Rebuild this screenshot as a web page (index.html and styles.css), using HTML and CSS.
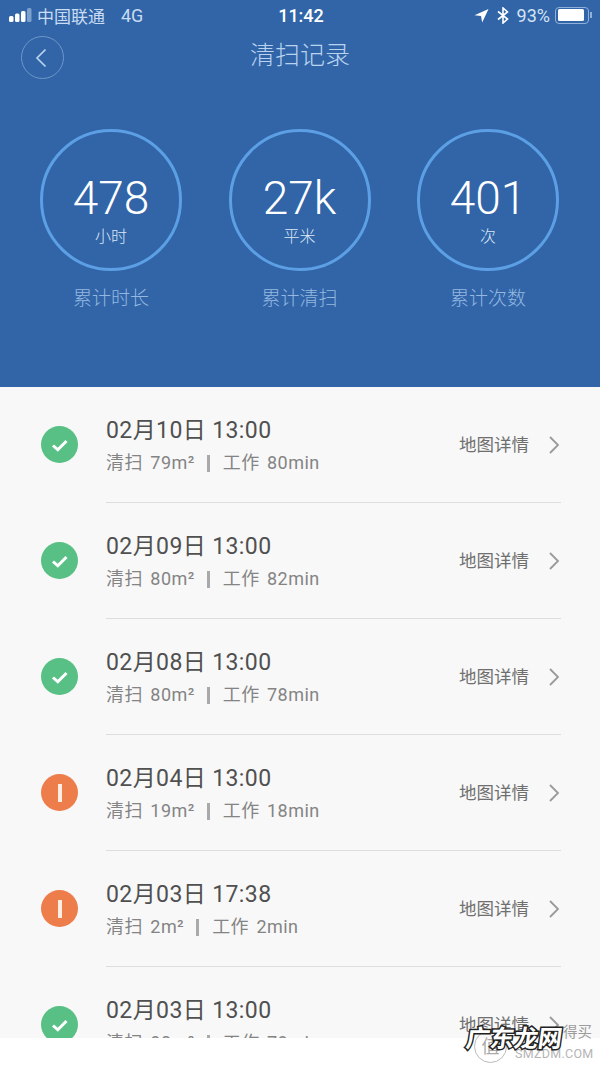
FILE: index.html
```html
<!DOCTYPE html>
<html lang="zh-CN">
<head>
<meta charset="utf-8">
<title>清扫记录</title>
<link rel="stylesheet" href="styles.css">
</head>
<body>
<div class="page">
  <header class="hero">
    <div class="status">
      <div class="status-left">
        <svg class="signal" width="24" height="14" viewBox="0 0 24 14"><rect x="0" y="8" width="4.5" height="6" rx="1.5" fill="#fff"/><rect x="6" y="5.5" width="4.5" height="8.5" rx="1.5" fill="#fff"/><rect x="12" y="3" width="4.5" height="11" rx="1.5" fill="#fff"/><rect x="18" y="0" width="4.5" height="14" rx="1.5" fill="#7c9fcb"/></svg>
        <span class="carrier">中国联通</span>
        <span class="net">4G</span>
      </div>
      <div class="time">11:42</div>
      <div class="status-right">
        <svg width="15" height="15" viewBox="0 0 15 15"><path d="M14.5 1 L0.5 7.2 L7 8 L8.2 14.5 Z" fill="#fff"/></svg>
        <svg class="bt" width="12" height="17" viewBox="0 0 12 17"><path d="M1 4.5 L10.5 12 L6 16 L6 1 L10.5 5 L1 12.5" fill="none" stroke="#fff" stroke-width="1.6"/></svg>
        <span class="pct">93%</span>
        <div class="battery"><div class="battery-fill"></div></div>
        <div class="battery-tip"></div>
      </div>
    </div>
    <div class="nav">
      <button class="back" type="button" aria-label="返回">
        <svg width="12" height="20" viewBox="0 0 12 20"><path d="M10.5 1.5 L2 10 L10.5 18.5" fill="none" stroke="#b9d3ef" stroke-width="1.7"/></svg>
      </button>
      <h1 class="title">清扫记录</h1>
    </div>
    <div class="stats">
      <div class="stat">
        <div class="ring"><span class="num">478</span><span class="unit">小时</span></div>
        <div class="stat-label">累计时长</div>
      </div>
      <div class="stat">
        <div class="ring"><span class="num">27k</span><span class="unit">平米</span></div>
        <div class="stat-label">累计清扫</div>
      </div>
      <div class="stat">
        <div class="ring"><span class="num">401</span><span class="unit">次</span></div>
        <div class="stat-label">累计次数</div>
      </div>
    </div>
  </header>
  <main class="list">
    <div class="row">
      <span class="dot ok"><svg width="20" height="20" viewBox="0 0 20 20"><path d="M3 10.5 L7.8 14.8 L16.5 6" fill="none" stroke="#fff" stroke-width="3"/></svg></span>
      <div class="row-body">
        <div class="row-text"><div class="date">02月10日 13:00</div><div class="meta"><span>清扫 79m²</span><i class="bar"></i><span>工作 80min</span></div></div>
        <div class="more">地图详情</div>
        <svg class="chev" width="12" height="20" viewBox="0 0 12 20"><path d="M2 2 L10 10 L2 18" fill="none" stroke="#9a9a9a" stroke-width="1.8"/></svg>
      </div>
    </div>
    <div class="row">
      <span class="dot ok"><svg width="20" height="20" viewBox="0 0 20 20"><path d="M3 10.5 L7.8 14.8 L16.5 6" fill="none" stroke="#fff" stroke-width="3"/></svg></span>
      <div class="row-body">
        <div class="row-text"><div class="date">02月09日 13:00</div><div class="meta"><span>清扫 80m²</span><i class="bar"></i><span>工作 82min</span></div></div>
        <div class="more">地图详情</div>
        <svg class="chev" width="12" height="20" viewBox="0 0 12 20"><path d="M2 2 L10 10 L2 18" fill="none" stroke="#9a9a9a" stroke-width="1.8"/></svg>
      </div>
    </div>
    <div class="row">
      <span class="dot ok"><svg width="20" height="20" viewBox="0 0 20 20"><path d="M3 10.5 L7.8 14.8 L16.5 6" fill="none" stroke="#fff" stroke-width="3"/></svg></span>
      <div class="row-body">
        <div class="row-text"><div class="date">02月08日 13:00</div><div class="meta"><span>清扫 80m²</span><i class="bar"></i><span>工作 78min</span></div></div>
        <div class="more">地图详情</div>
        <svg class="chev" width="12" height="20" viewBox="0 0 12 20"><path d="M2 2 L10 10 L2 18" fill="none" stroke="#9a9a9a" stroke-width="1.8"/></svg>
      </div>
    </div>
    <div class="row">
      <span class="dot warn"><i class="warn-mark"></i></span>
      <div class="row-body">
        <div class="row-text"><div class="date">02月04日 13:00</div><div class="meta"><span>清扫 19m²</span><i class="bar"></i><span>工作 18min</span></div></div>
        <div class="more">地图详情</div>
        <svg class="chev" width="12" height="20" viewBox="0 0 12 20"><path d="M2 2 L10 10 L2 18" fill="none" stroke="#9a9a9a" stroke-width="1.8"/></svg>
      </div>
    </div>
    <div class="row">
      <span class="dot warn"><i class="warn-mark"></i></span>
      <div class="row-body">
        <div class="row-text"><div class="date">02月03日 17:38</div><div class="meta"><span>清扫 2m²</span><i class="bar"></i><span>工作 2min</span></div></div>
        <div class="more">地图详情</div>
        <svg class="chev" width="12" height="20" viewBox="0 0 12 20"><path d="M2 2 L10 10 L2 18" fill="none" stroke="#9a9a9a" stroke-width="1.8"/></svg>
      </div>
    </div>
    <div class="row">
      <span class="dot ok"><svg width="20" height="20" viewBox="0 0 20 20"><path d="M3 10.5 L7.8 14.8 L16.5 6" fill="none" stroke="#fff" stroke-width="3"/></svg></span>
      <div class="row-body">
        <div class="row-text"><div class="date">02月03日 13:00</div><div class="meta"><span>清扫 80m²</span><i class="bar"></i><span>工作 78min</span></div></div>
        <div class="more">地图详情</div>
        <svg class="chev" width="12" height="20" viewBox="0 0 12 20"><path d="M2 2 L10 10 L2 18" fill="none" stroke="#9a9a9a" stroke-width="1.8"/></svg>
      </div>
    </div>
  </main>
  <div class="mark">
    <span class="mark-seal">值</span>
    <span class="mark-buy">得买</span>
    <span class="mark-site">SMZDM.COM</span>
    <span class="mark-name">广东龙网</span>
  </div>
</div>
</body>
</html>
```
FILE: styles.css
```css
* { box-sizing: border-box; }
html, body { margin: 0; padding: 0; background: #fff; }
body { font-family: Roboto, "Noto Sans CJK SC", sans-serif; }
.page { position: relative; width: 600px; height: 1067px; overflow: hidden; }

.hero { height: 387px; background: #3165a8; color: #fff; }
.status { display: flex; align-items: center; justify-content: space-between; height: 30px; padding: 0 8px 0 9px; position: relative; }
.status-left, .status-right { display: flex; align-items: center; }
.status-left { color: #c9dcf2; font-size: 17px; }
.carrier { margin-left: 4px; }
.net { margin-left: 16px; font-size: 18px; }
.time { position: absolute; left: 2px; right: 0; text-align: center; font-size: 18px; font-weight: 500; }
.status-right { font-size: 18px; color: #d5e3f3; gap: 8px; }
.bt { margin-left: 0; }
.battery { width: 34px; height: 17px; border: 1.5px solid #8fb0d8; border-radius: 4px; padding: 1.5px; margin-left: -3px; }
.battery-fill { height: 100%; background: #fff; border-radius: 1.5px; width: 93%; }
.battery-tip { width: 2px; height: 6px; background: #8fb0d8; margin-left: -7px; }

.nav { position: relative; height: 54px; display: flex; align-items: flex-start; justify-content: center; padding-top: 9px; }
.back { position: absolute; left: 21px; top: 6px; width: 43px; height: 43px; border: 1px solid #6f97c9; border-radius: 50%; background: none; padding: 0 3px 0 0; display: flex; align-items: center; justify-content: center; }
.title { margin: 0; font-size: 25px; line-height: 34px; font-weight: 300; color: #b9d3ef; }

.stats { display: flex; justify-content: center; gap: 46.5px; padding: 45px 1px 0 0; }
.stat { display: flex; flex-direction: column; align-items: center; }
.ring { width: 142px; height: 142px; border: 3px solid #5c9fe4; border-radius: 50%; display: flex; flex-direction: column; align-items: center; padding-top: 41px; }
.num { font-size: 46px; line-height: 50px; font-weight: 300; color: #fff; }
.unit { font-size: 16px; line-height: 22px; margin-top: 3px; color: #dbe8f6; font-weight: 300; }
.stat-label { margin-top: 15px; font-size: 19px; line-height: 26px; color: #94b8e0; font-weight: 300; }

.list { height: 651px; overflow: hidden; background: #f8f8f8; }
.row { display: flex; height: 116px; align-items: stretch; padding-left: 41px; }
.dot { flex: none; width: 37px; height: 37px; border-radius: 50%; margin-top: 39px; display: flex; align-items: center; justify-content: center; }
.ok { background: #58c084; }
.warn { background: #ee7d4c; }
.warn-mark { display: block; width: 4px; height: 18px; background: #fdeee3; }
.row-body { flex: none; width: 455px; margin-left: 28px; display: flex; align-items: flex-start; border-bottom: 1px solid #dedede; height: 116px; padding-top: 30px; }
.row-text { width: 353px; }
.date { font-size: 23px; line-height: 28px; color: #505050; letter-spacing: 0.4px; }
.meta { margin-top: 5px; display: flex; align-items: center; font-size: 18px; line-height: 26px; color: #848484; letter-spacing: 0.45px; word-spacing: 2.5px; }
.bar { display: block; width: 3px; height: 17px; background: #a9a9a9; margin: 0 13px 0 12px; }
.more { font-size: 17.5px; line-height: 24px; color: #6f6f6f; margin-top: 16px; width: 89px; }
.chev { margin-top: 18px; }

.mark { position: absolute; left: 0; top: 0; width: 600px; height: 1067px; pointer-events: none; }
.mark-seal { position: absolute; left: 474px; top: 1030px; width: 33px; height: 33px; border: 1px solid #bbb; border-radius: 50%; text-align: center; line-height: 31px; font-size: 18px; color: #aaa; }
.mark-buy { position: absolute; left: 563px; top: 1020px; font-size: 14.5px; color: #9c9c9c; }
.mark-site { position: absolute; left: 515px; top: 1046px; font-size: 12.5px; color: #b5b5b5; letter-spacing: 0.3px; }
.mark-name { position: absolute; left: 466px; top: 1022px; font-size: 24px; font-weight: 700; color: #fff; -webkit-text-stroke: 3px #222; paint-order: stroke fill; line-height: 34px; transform: skewX(-8deg); }
```
